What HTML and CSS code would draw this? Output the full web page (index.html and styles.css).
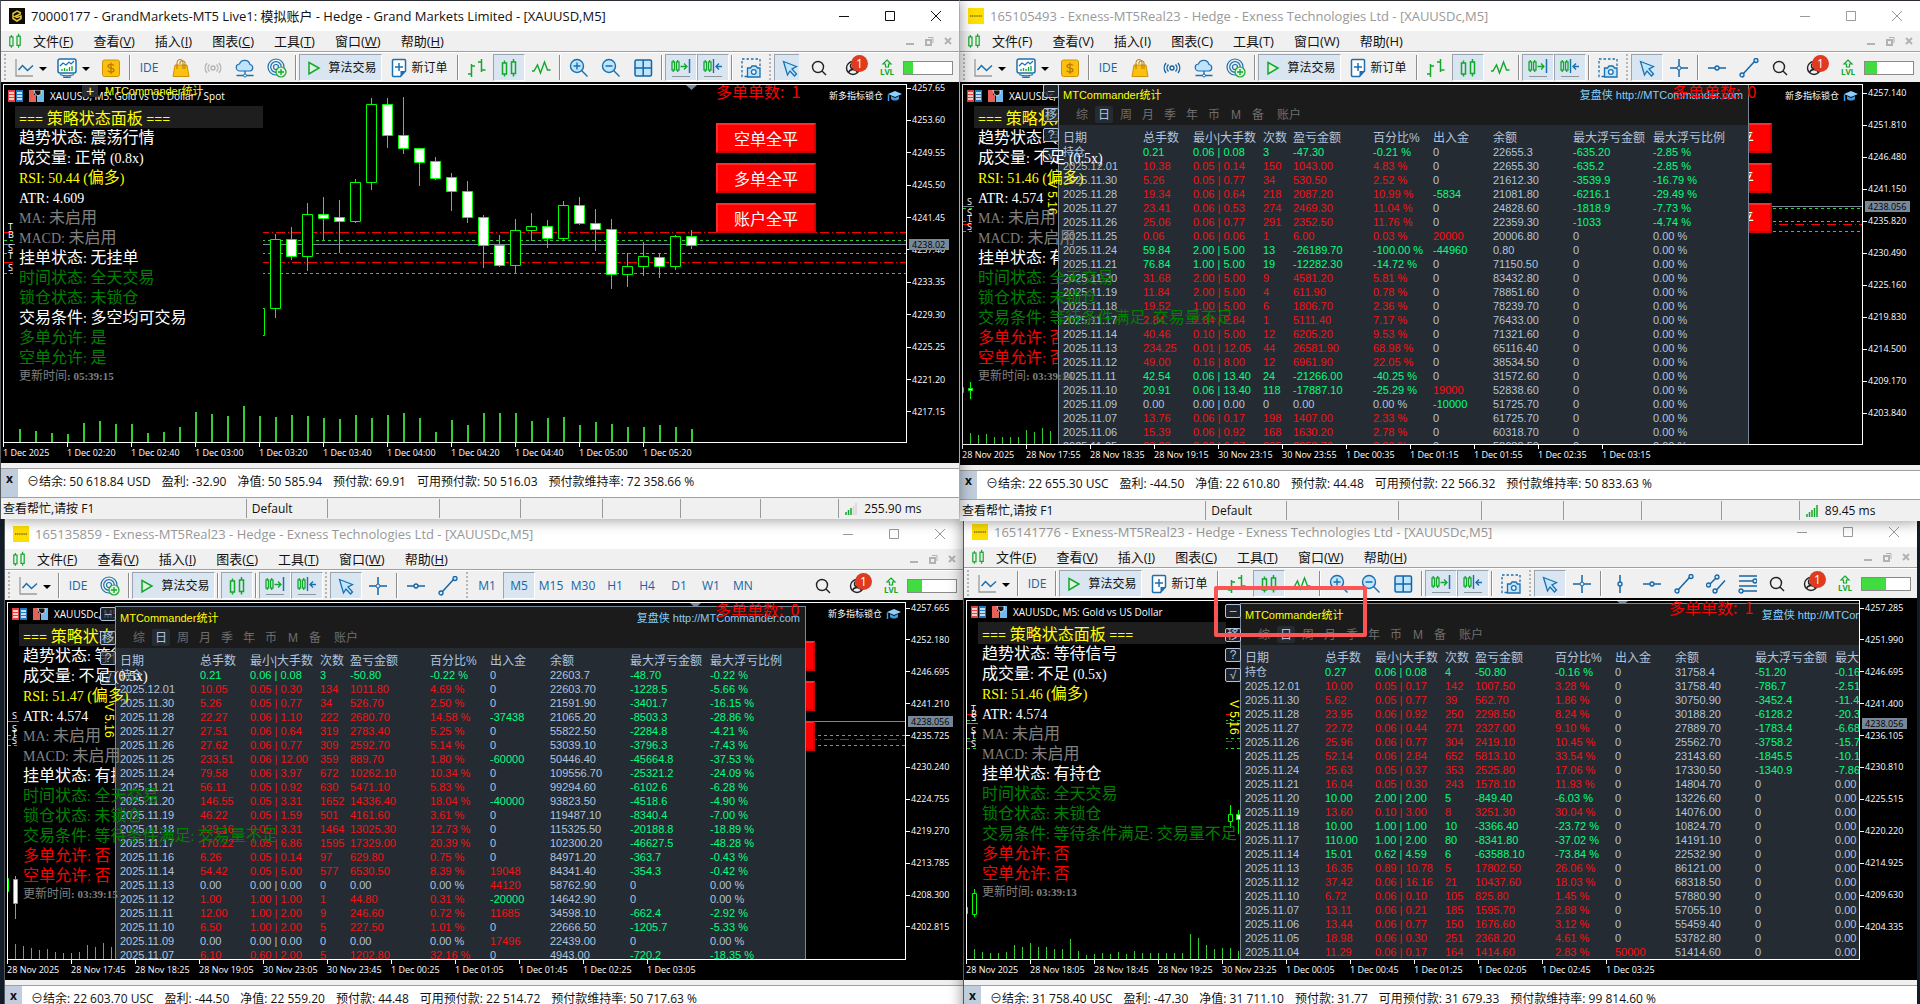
FILE: index.html
```html
<!DOCTYPE html>
<html lang="zh-CN">
<head>
<meta charset="utf-8">
<title>MetaTrader 5</title>
<link rel="stylesheet" href="styles.css">
</head>
<body>
<svg class="sprite" aria-hidden="true">
  <symbol id="i-candles" viewBox="0 0 20 20"><g fill="none" stroke="#12a82a" stroke-width="1.5"><rect x="3.5" y="5" width="4" height="11"/><path d="M5.500 2.500v2.500M5.500 16v2.500M14.500 1v3M14.500 15.500v3"/><rect x="12.500" y="4" width="4" height="11.500"/></g></symbol>
  <symbol id="i-line" viewBox="0 0 20 20"><path d="M2 1v17h17" fill="none" stroke="#9a9a9a" stroke-width="1.300"/><path d="M4.500 12l4-4.500 5 5 5.500-5" fill="none" stroke="#1b6fae" stroke-width="1.500"/></symbol>
  <symbol id="i-ind" viewBox="0 0 20 20"><rect x="1" y="1" width="18" height="14" rx="2" fill="#fff" stroke="#1b6fae" stroke-width="1.500"/><path d="M3 8l3-3 3 2 3-3 2 2 3-3" fill="none" stroke="#1b6fae" stroke-width="1.200"/><path d="M5 13v-2M7.500 13v-3M10 13v-2M12.500 13v-4M15 13v-5" stroke="#12a82a" stroke-width="1.300"/><path d="M3 16.500c4 1.500 10 1.500 14 0M6 18.800c3 .8 5 .8 8 0" fill="none" stroke="#1b6fae" stroke-width="1.300"/></symbol>
  <symbol id="i-dollar" viewBox="0 0 20 20"><rect x="1.500" y="2" width="17" height="16.500" rx="2" fill="#fcc10f" stroke="#cf9300"/><path d="M10 4.500v11.500M13 7.500c-1-1.700-6-1.700-6 .7 0 2.500 6 1.400 6 4 0 2.400-5 2.400-6.300.5" fill="none" stroke="#b87800" stroke-width="1.300"/></symbol>
  <symbol id="i-bag" viewBox="0 0 20 20"><path d="M4 7h12l2 11.500H2z" fill="#fcc10f" stroke="#cf9300"/><path d="M6 11V4.500a3 3 0 0 1 6 0V11M9 6V4a3 2.500 0 0 1 5 0v7" fill="none" stroke="#b87800"/></symbol>
  <symbol id="i-signal" viewBox="0 0 20 20"><g fill="none" stroke="currentColor" stroke-width="1.400"><circle cx="10" cy="10" r="2"/><path d="M6.500 6.500a5 5 0 0 0 0 7M13.500 6.500a5 5 0 0 1 0 7M4 5a8 8 0 0 0 0 10M16 5a8 8 0 0 1 0 10"/></g></symbol>
  <symbol id="i-cloud" viewBox="0 0 20 20"><path d="M5 13a3.500 3.500 0 0 1-.5-7A5.500 5.500 0 0 1 15 6.500a3.300 3.300 0 0 1 0 6.500z" fill="#bfe3fa" stroke="#1b6fae" stroke-width="1.200"/><path d="M10 13v3M1.500 17.500h7M11.500 17.500h7" stroke="#1b6fae" stroke-width="1.300"/><circle cx="10" cy="17.500" r="1.500" fill="none" stroke="#1b6fae"/></symbol>
  <symbol id="i-vps" viewBox="0 0 20 20"><g fill="none" stroke="#1b6fae" stroke-width="1.200"><circle cx="9" cy="9" r="8"/><circle cx="9" cy="9" r="5.300"/><circle cx="9" cy="9" r="2.500"/></g><circle cx="14" cy="14" r="5" fill="#dff5df" stroke="#12a82a" stroke-width="1.200"/><path d="M14 11v6M11 14h6" stroke="#12a82a" stroke-width="1.300"/></symbol>
  <symbol id="i-play" viewBox="0 0 20 20"><path d="M5 4.500l10 5.500-10 6z" fill="#dcf5dc" stroke="#12a82a" stroke-width="1.500"/></symbol>
  <symbol id="i-order" viewBox="0 0 20 20"><path d="M4.500 1.500h11a1 1 0 0 1 1 1v10.500l-5 5.500h-7a1 1 0 0 1-1-1v-15a1 1 0 0 1 1-1z" fill="#fff" stroke="#1b6fae" stroke-width="1.500"/><path d="M16.500 13l-5 5.500V13z" fill="#1b6fae"/><path d="M10 5v8M6 9h8" stroke="#1b6fae" stroke-width="1.500"/></symbol>
  <symbol id="i-bars" viewBox="0 0 20 20"><path d="M4.500 6v13M1 16h3.500M4.500 8h3.500M14.500 1v13M11 4h3.500M14.500 12h4" fill="none" stroke="#12a82a" stroke-width="1.500"/></symbol>
  <symbol id="i-zigzag" viewBox="0 0 20 20"><path d="M1 13h2l3.500-6 3 8 4-11 3 8h3" fill="none" stroke="#12a82a" stroke-width="1.400"/></symbol>
  <symbol id="i-zin" viewBox="0 0 20 20"><circle cx="8" cy="8" r="6.500" fill="#bfe6ff" stroke="#1b6fae" stroke-width="1.400"/><path d="M12.800 12.800L18.500 18.500M8 4.500v7M4.500 8h7" stroke="#1b6fae" stroke-width="1.400"/></symbol>
  <symbol id="i-zout" viewBox="0 0 20 20"><circle cx="8" cy="8" r="6.500" fill="#bfe6ff" stroke="#1b6fae" stroke-width="1.400"/><path d="M12.800 12.800L18.500 18.500M4.500 8h7" stroke="#1b6fae" stroke-width="1.400"/></symbol>
  <symbol id="i-grid" viewBox="0 0 20 20"><rect x="2" y="2" width="16.500" height="16" rx="1.500" fill="#bfe6ff" stroke="#1565a5" stroke-width="1.500"/><path d="M10.200 2v16M2 10h16.500" stroke="#1565a5" stroke-width="1.500"/></symbol>
  <symbol id="i-shiftr" viewBox="0 0 20 20"><g fill="none" stroke="#12a82a" stroke-width="1.300"><rect x="1" y="4" width="2.500" height="8"/><rect x="5.500" y="4" width="2.500" height="8"/><path d="M2.200 2v2M2.200 12v2M6.700 2v2M6.700 12v2M9.500 8.500H16M13 5.500l3 3-3 3"/></g><path d="M18.500 1v14" stroke="#1b6fae" stroke-width="1.500"/><path d="M1 18.500h18" stroke="#8d949b"/></symbol>
  <symbol id="i-shiftl" viewBox="0 0 20 20"><g fill="none" stroke="#12a82a" stroke-width="1.300"><rect x="1" y="4" width="2.500" height="8"/><rect x="5.500" y="4" width="2.500" height="8"/><path d="M2.200 2v2M2.200 12v2M6.700 2v2M6.700 12v2"/></g><path d="M10.500 1v14M19 8.500h-6M16 5.500l-3 3 3 3" fill="none" stroke="#1b6fae" stroke-width="1.400"/><path d="M1 18.500h18" stroke="#8d949b"/></symbol>
  <symbol id="i-cam" viewBox="0 0 20 20"><path d="M6 18.500H1V1h18v7" fill="none" stroke="#1b6fae" stroke-width="1.300" stroke-dasharray="2.500 2"/><path d="M6.500 10h3l1.500-2h4l1.500 2h2.500v9h-12.500z" fill="#bfe6ff" stroke="#1b6fae" stroke-width="1.300"/><circle cx="12.800" cy="14" r="2.300" fill="#fff" stroke="#1b6fae" stroke-width="1.300"/></symbol>
  <symbol id="i-cursor" viewBox="0 0 20 20"><path d="M3.500 3.500l13 5-4.500 2.500 4.500 5-2 2-4.500-5-2.500 4z" fill="#bfe6ff" stroke="#1b6fae" stroke-width="1.300"/></symbol>
  <symbol id="i-cross" viewBox="0 0 20 20"><path d="M10 1v7M10 12v7M1 10h7M12 10h7" stroke="#1565a5" stroke-width="1.500"/><circle cx="10" cy="10" r="2" fill="#cfeaff" stroke="#1565a5"/></symbol>
  <symbol id="i-hline" viewBox="0 0 20 20"><path d="M1 10h7M12 10h7" stroke="#1565a5" stroke-width="1.500"/><circle cx="10" cy="10" r="2" fill="#cfeaff" stroke="#1565a5" stroke-width="1.300"/></symbol>
  <symbol id="i-vline" viewBox="0 0 20 20"><path d="M10 1v7M10 12v7" stroke="#1565a5" stroke-width="1.500"/><circle cx="10" cy="10" r="2" fill="#cfeaff" stroke="#1565a5" stroke-width="1.300"/></symbol>
  <symbol id="i-trend" viewBox="0 0 20 20"><path d="M4.500 15.500l11-12" stroke="#1565a5" stroke-width="1.500"/><g fill="#cfeaff" stroke="#1565a5" stroke-width="1.300"><circle cx="3" cy="17" r="2"/><circle cx="17" cy="2.500" r="2"/></g></symbol>
  <symbol id="i-channel" viewBox="0 0 20 20"><path d="M3 11l8-8M10 16.500l9-10" stroke="#1565a5" stroke-width="1.500"/><g fill="#cfeaff" stroke="#1565a5" stroke-width="1.300"><circle cx="2.500" cy="11" r="2"/><circle cx="11" cy="3" r="2"/><circle cx="9" cy="17" r="2"/></g></symbol>
  <symbol id="i-fibo" viewBox="0 0 20 20"><path d="M1 2h18M1 7h14M1 12h18M5 17h14" stroke="#1565a5" stroke-width="1.500"/><g fill="#cfeaff" stroke="#1565a5" stroke-width="1.300"><circle cx="17" cy="7" r="2"/><circle cx="3" cy="17" r="2"/></g></symbol>
  <symbol id="i-search" viewBox="0 0 20 20"><circle cx="9" cy="9" r="5.500" fill="none" stroke="#222" stroke-width="1.400"/><path d="M13 13l4 4" stroke="#222" stroke-width="1.500"/></symbol>
  <symbol id="i-user" viewBox="0 0 20 20"><g fill="none" stroke="#222" stroke-width="1.400"><circle cx="10" cy="10" r="6.500"/><circle cx="10" cy="8" r="2.500"/><path d="M5.500 14.500c1.500-4 7.500-4 9 0"/></g></symbol>
  <symbol id="i-lvl" viewBox="0 0 12 9"><path d="M6 1L10 5H7.500V8h-3V5H2z" fill="none" stroke="#12a82a" stroke-width="1.200"/></symbol>
  <symbol id="i-book" viewBox="0 0 15 12"><path d="M0 0h7v12H0z" fill="#e8403a"/><path d="M8 0h7v12H8z" fill="#1f78c0"/><path d="M1 3h5M1 6h5M1 9h5M9 3h5M9 6h5M9 9h5" stroke="#fff" stroke-width="1.500"/></symbol>
  <symbol id="i-deal" viewBox="0 0 15 12"><path d="M0 0h5v5h2v7H0z" fill="#e8605a"/><path d="M15 0h-3v5H8v7h7z" fill="#6fb9ee"/><path d="M5 0h7v4l-3 2-3-2z" fill="#111" stroke="#fff" stroke-width=".8"/></symbol>
  <symbol id="i-cap" viewBox="0 0 15 12"><path d="M8 1l7 3-7 3-7-3z" fill="#8fd0ff"/><path d="M4 6v3c2 2 6 2 8 0V6L8 8z" fill="#3d9be0"/><path d="M1.500 4.500V11" stroke="#3d9be0" stroke-width="1.500"/></symbol>
  <symbol id="i-net" viewBox="0 0 12 12"><path d="M1 12V9M3.500 12V7" stroke="#12a82a" stroke-width="1.500"/><path d="M6 12V5" stroke="#12a82a" stroke-width="1.500"/><path d="M8.500 12V3M11 12V0" stroke="currentColor" stroke-width="1.500"/></symbol>
  <symbol id="i-grand" viewBox="0 0 16 16"><path fill="#0b0b08" d="M0 0h16v16H0z"/><path d="M12 5L8 3 4 5.500v5L8 13l4-2.500V8L8 9.500 6 8.500 12 5.500" fill="none" stroke="#e8c33a" stroke-width="1.500"/></symbol>
  <symbol id="i-exness" viewBox="0 0 16 16"><path fill="#ffdf00" d="M0 0h16v16H0z"/><path d="M2 8h12" stroke="#7d7016" stroke-width="1.500" stroke-dasharray="1.400 .7"/></symbol>
  <symbol id="i-min" viewBox="0 0 12 12"><path d="M1 6.500h10" stroke="currentColor"/></symbol>
  <symbol id="i-max" viewBox="0 0 12 12"><path d="M1.500 1.500h9v9h-9z" fill="none" stroke="currentColor"/></symbol>
  <symbol id="i-close" viewBox="0 0 12 12"><path d="M1 1l10 10M11 1L1 11" stroke="currentColor"/></symbol>
  <symbol id="i-mmin" viewBox="0 0 10 10"><path d="M1 8h8" stroke="#b2b2b2" stroke-width="2"/></symbol>
  <symbol id="i-mres" viewBox="0 0 10 10"><path d="M2 4h5v5H2z" fill="none" stroke="#b2b2b2" stroke-width="2"/><path d="M4 1.500h5V7" fill="none" stroke="#b2b2b2"/></symbol>
  <symbol id="i-mclose" viewBox="0 0 10 10"><path d="M2 2l6 6M8 2L2 8" stroke="#b2b2b2" stroke-width="2"/></symbol>
</svg>

<main class="desktop">
  <section class="win win-1 active" data-id="grand" data-tools="line* ind* dollar | IDE bag signal cloud vps | algo order | bars candles! zigzag | zin zout grid | shiftr! shiftl! | cam : cursor!">
    <header class="titlebar"><svg class="app-icon"><use href="#i-grand"/></svg><h1>70000177 - GrandMarkets-MT5 Live1: 模拟账户 - Hedge - Grand Markets Limited - [XAUUSD,M5]</h1></header>
    <div class="chart"></div>
    <div class="trade"><button aria-label="关闭">x</button><p><span>⊖结余: 50 618.84 USD</span><span>盈利: -32.90</span><span>净值: 50 585.94</span><span>预付款: 69.91</span><span>可用预付款: 50 516.03</span><span>预付款维持率: 72 358.66 %</span></p></div>
    <footer class="status" data-ping="255.90 ms"></footer>
  </section>

  <section class="win win-2 plain-keys" data-id="ex493" data-tools="line* ind* dollar | IDE bag signal cloud vps | algo order | bars candles! zigzag | shiftr! shiftl! | cam : cursor! cross | hline trend">
    <header class="titlebar"><svg class="app-icon"><use href="#i-exness"/></svg><h1>165105493 - Exness-MT5Real23 - Hedge - Exness Technologies Ltd - [XAUUSDc,M5]</h1></header>
    <div class="chart"></div>
    <div class="trade"><button aria-label="关闭">x</button><p><span>⊖结余: 22 655.30 USC</span><span>盈利: -44.50</span><span>净值: 22 610.80</span><span>预付款: 44.48</span><span>可用预付款: 22 566.32</span><span>预付款维持率: 50 833.63 %</span></p></div>
    <footer class="status" data-ping="89.45 ms"></footer>
  </section>

  <section class="win win-3" data-id="ex859" data-tools="line* | IDE vps | algo | candles! | shiftr! shiftl! : cursor! cross | hline trend : M1 M5! M15 M30 H1 H4 D1 W1 MN">
    <header class="titlebar"><svg class="app-icon"><use href="#i-exness"/></svg><h1>165135859 - Exness-MT5Real23 - Hedge - Exness Technologies Ltd - [XAUUSDc,M5]</h1></header>
    <div class="chart"></div>
    <div class="trade"><button aria-label="关闭">x</button><p><span>⊖结余: 22 603.70 USC</span><span>盈利: -44.50</span><span>净值: 22 559.20</span><span>预付款: 44.48</span><span>可用预付款: 22 514.72</span><span>预付款维持率: 50 717.63 %</span></p></div>
  </section>

  <section class="win win-4" data-id="ex776" data-tools="line* | IDE | algo order | bars candles! zigzag | zin zout grid | shiftr! shiftl! | cam : cursor! cross | vline hline trend channel fibo">
    <header class="titlebar"><svg class="app-icon"><use href="#i-exness"/></svg><h1>165141776 - Exness-MT5Real23 - Hedge - Exness Technologies Ltd - [XAUUSDc,M5]</h1></header>
    <div class="chart"></div>
    <div class="trade"><button aria-label="关闭">x</button><p><span>⊖结余: 31 758.40 USC</span><span>盈利: -47.30</span><span>净值: 31 711.10</span><span>预付款: 31.77</span><span>可用预付款: 31 679.33</span><span>预付款维持率: 99 814.60 %</span></p></div>
    <div class="highlight"></div>
  </section>
</main>
<script src="app.js"></script>
</body>
</html>
```

FILE: styles.css
```css
* { box-sizing: border-box; }

:root {
  --ui: "Open Sans", "Noto Sans CJK SC", sans-serif;
  --object: "Liberation Sans", "Noto Sans CJK SC", sans-serif;
  --face: #f0f0f0;
  --steel: #b0c4de;
  --slate: #778899;
  --up: #00ff00;
}

body { margin: 0; font: 12px/16px var(--ui); color: #111; }
h1, h2, p, ul, ol { margin: 0; padding: 0; font: inherit; list-style: none; }
button { margin: 0; padding: 0; border: 0; background: none; font: inherit; color: inherit; }
svg { display: block; }
.sprite { display: none; }

.desktop { position: relative; height: 100vh; overflow: hidden; background: #16232f; }

/* ---- windows ---- */
.win { position: absolute; display: flex; flex-direction: column; background: var(--face); border-left: 1px solid #55585c; box-shadow: 0 0 14px rgba(0, 0, 0, .45); }
.win-1 { left: 0; top: 0; width: calc(50% - 1px); height: calc(50vh + 17px); z-index: 4; border-top: 1px solid #2b2b33; --axis: 52px; --pad-top: 0; --pad-bottom: 45px; }
.win-2 { left: calc(50% - 1px); top: 0; right: 0; height: calc(50vh + 19px); z-index: 3; border-top: 1px solid #2b2b33; border-left-color: #d8d8d8; --axis: 57px; --pad-top: 5px; --pad-bottom: 46px; }
.win-3 { left: 4px; top: calc(50vh + 16px); width: calc(50% - 1px); height: calc(50vh + 16px); z-index: 1; border-top: 1px solid #888; --axis: 57px; --pad-top: 2px; --pad-bottom: 47px; }
.win-4 { left: calc(50% + 3px); top: calc(50vh + 14px); right: 3px; height: calc(50vh + 18px); z-index: 2; border-top: 1px solid #888; --axis: 57px; --pad-top: 4px; --pad-bottom: 47px; }
.win-3, .win-4 { padding-bottom: 21px; }

.titlebar { flex: none; display: flex; align-items: center; height: 30px; padding-left: 8px; background: #fff; color: #999; white-space: nowrap; font-size: 13px; }
.active .titlebar { color: #111; }
.app-icon { width: 16px; height: 16px; margin-right: 6px; }
.titlebar h1 { flex: 1; }
.caption { display: flex; }
.caption button { width: 46px; height: 30px; display: grid; place-items: center; }
.caption svg { width: 12px; height: 12px; }

.menubar { flex: none; display: flex; align-items: center; height: 21px; padding-left: 6px; border-bottom: 1px solid #a0a0a0; font-size: 13px; }
.menubar > svg { width: 16px; height: 16px; }
.menubar ul { display: flex; flex: 1; }
.menubar li button { padding: 0 10px; }
.plain-keys u { text-decoration: none; }
.mdi { display: flex; gap: 9px; padding-right: 6px; }
.mdi svg { width: 10px; height: 10px; }

.toolbar { flex: none; display: flex; height: 30px; border-top: 1px solid #fff; }
.tools { flex: 1; min-width: 0; display: flex; align-items: center; overflow: hidden; padding-left: 1px; }
.tools button { flex: none; width: 32px; height: 27px; display: flex; align-items: center; justify-content: center; color: #1565a5; border: 1px solid transparent; background-clip: padding-box; }
.tools svg { flex: none; width: 20px; height: 20px; }
.tools button.pressed { background-color: #d9e6f2; border-color: #9aa5b0 #fff #fff #9aa5b0; }
.tools .drop { width: 43px; gap: 5px; }
.tools .drop::after { content: ""; border: 4px solid transparent; border-top-color: #000; border-bottom: 0; margin-top: 3px; }
.tools .algo { width: 83px; gap: 4px; color: #111; }
.tools .order { width: 73px; gap: 2px; color: #111; }
.win-1 .tools .signal { color: #b4b4b4; }
.sep { flex: none; width: 2px; height: 25px; margin: 0 2px; border-left: 1px solid #8c8c8c; border-right: 1px solid #fff; }
.grip { flex: none; width: 2px; height: 27px; margin: 0 3px 0 2px; background: repeating-linear-gradient(#b5b5b5 0 2px, transparent 2px 4px); }
.right-tools { flex: none; display: flex; align-items: center; padding: 0 6px 0 4px; background: var(--face); }
.right-tools button { position: relative; width: 32px; height: 27px; display: flex; align-items: center; justify-content: center; }
.right-tools svg { width: 20px; height: 20px; }
.right-tools .lvl { flex-direction: column; font: bold 8px/8px var(--ui); color: #12a82a; }
.right-tools .lvl svg { flex: none; width: 12px; height: 9px; }
.right-tools .user { width: 36px; }
.badge { position: absolute; left: 16px; top: 1px; width: 17px; height: 17px; border-radius: 50%; background: #e03a20; color: #fff; font: 12px/17px var(--ui); text-align: center; }
progress { appearance: none; width: 50px; height: 14px; border: 1px solid #8a8a8a; background: #fff; }
progress::-webkit-progress-bar { background: #fff; }
progress::-webkit-progress-value { background: #40dc40; }

/* ---- chart ---- */
.chart { flex: 1; min-height: 0; display: grid; grid-template-columns: minmax(0, 1fr) var(--axis); grid-template-rows: minmax(0, 1fr) 20px; padding: 2px 0 0 2px; background: #000; color: #fff; font-size: 9px; line-height: 12px; }
.plot { position: relative; overflow: hidden; border: 1px solid #fff; }
.plot > .canvas { position: absolute; inset: 0; width: 100%; height: 100%; }
.prices { grid-row: 1 / 3; grid-column: 2; position: relative; display: flex; flex-direction: column; justify-content: space-between; margin-top: -2px; padding: var(--pad-top) 0 var(--pad-bottom); }
.prices li { display: flex; align-items: center; gap: 1px; }
.prices li::before { content: ""; width: 4px; height: 1px; background: #fff; }
.prices .last { position: absolute; left: 2px; padding: 0 4px 0 3px; line-height: 11px; background: var(--slate); color: #000; }
.prices .last::before { display: none; }
.times { display: flex; overflow: hidden; }
.times li { flex: none; width: 64px; padding-top: 4px; white-space: nowrap; position: relative; }
.times li::before { content: ""; position: absolute; left: 0; top: 0; width: 1px; height: 4px; background: #fff; }

.volume { position: absolute; left: 7px; bottom: 0; display: flex; align-items: flex-end; gap: 7px; }
.volume i { width: 1px; background: #32cd32; }
.win-1 .volume { left: 15px; gap: 14px; }
.win-1 .volume i { width: 2px; }

.symbol { position: absolute; left: 4px; top: 5px; display: flex; align-items: center; gap: 6px; white-space: nowrap; font-size: 10px; }
.symbol svg { width: 15px; height: 12px; }
.expert { position: absolute; right: 4px; top: 5px; display: flex; align-items: center; gap: 4px; font-family: "Noto Sans CJK SC", sans-serif; }
.expert svg { width: 15px; height: 12px; }

.strategy { position: absolute; left: 11px; top: 21px; width: 248px; background: #000; white-space: nowrap; font-family: "Noto Sans CJK SC", sans-serif; font-size: 16px; line-height: 20px; }
.strategy h2 { height: 22px; margin-bottom: -2px; padding: 0 4px; background: #1e1e1e; color: #ff0; font-size: 16px; line-height: 22px; }
.strategy li { position: relative; width: max-content; height: 20px; padding-left: 4px; }
.strategy .over { z-index: 3; }
.strategy span { font: 14px/20px "Liberation Serif", serif; }
.strategy h2 span { font-family: var(--ui); }
.strategy .time { font-size: 12px; line-height: 18px; }
.strategy .time span { font: bold 11px/18px "Liberation Serif", serif; }
.white { color: #fff; } .yellow { color: #ff0; } .grey { color: #808080; } .green { color: #008000; } .red { color: #f00; }

.count { position: absolute; right: 98px; top: -4px; width: 92px; z-index: 4; color: #f00; font: 16px/20px "Noto Sans CJK SC", sans-serif; white-space: pre; }
.actions { position: absolute; right: 90px; top: 38px; display: grid; gap: 10px; }
.actions button { width: 100px; height: 30px; background: #f00; border: 2px solid; border-color: #ff2a2a #d00000 #d00000 #ff2a2a; color: #fff; font: 16px/20px "Noto Sans CJK SC", sans-serif; }

.folded { position: absolute; left: 78px; top: 0; display: flex; gap: 7px; color: #ff0; font: 11px/12px var(--object); }
.folded button { width: 16px; height: 12px; background: #252b33; font-size: 14px; }

/* ---- statistics panel ---- */
.stats { position: absolute; z-index: 2; bottom: 0; width: 691px; background: #252b33; border: 1px solid var(--slate); border-bottom: 0; color: var(--steel); font: 11px/14px var(--object); }
.win-2 .stats { left: 95px; top: -2px; }
.win-3 .stats { left: 107px; top: 3px; }
.win-4 .stats { left: 273px; top: 2px; }
.stats header { height: 41px; background: #1b1b1b; font-size: 12px; }
.stats .head { display: flex; justify-content: space-between; padding: 0 5px 0 4px; font-size: 11px; line-height: 22px; color: #ff0; }
.stats .head a { color: #87cefa; text-decoration: none; }
.tabs { display: flex; padding-left: 14px; gap: 4px; color: #6e6e6e; }
.tabs button { min-width: 18px; height: 17px; border-radius: 2px; }
.tabs .on { background: #252b33; color: var(--steel); }
.tabs button:last-child { margin-left: 6px; }
.stats table { table-layout: fixed; width: 689px; margin-top: 6px; border-collapse: collapse; }
.stats th, .stats td { height: 14px; padding: 0 0 0 4px; text-align: left; font-weight: normal; white-space: nowrap; line-height: 14px; }
.stats th { font-size: 12px; }
.stats .gain { color: #f01414; } .stats .loss { color: #00ff7f; }

.side { position: absolute; z-index: 2; right: 100%; top: 0; width: 16px; display: grid; gap: 6px; }
.side button { height: 14px; background: #252b33cc; border: 1px solid var(--steel); border-radius: 2px; color: var(--steel); font: 12px/12px var(--object); overflow: hidden; }
.side button:first-child { margin-bottom: 4px; }
.side span { writing-mode: vertical-rl; margin-top: 12px; color: #ff0; font-size: 12px; }

/* ---- bottom panes ---- */
.trade { flex: none; display: flex; height: 35px; border-top: 5px solid var(--face); background: #fff; box-shadow: inset 0 1px #a0a0a0, inset 0 -1px #a0a0a0; white-space: nowrap; }
.trade button { width: 17px; margin: 1px 0; padding-bottom: 8px; background: #c0cddc; line-height: 12px; font-weight: bold; }
.trade p { display: flex; gap: 11px; padding-left: 9px; line-height: 28px; }
.status { flex: none; display: grid; height: 21px; grid-template-columns: 245fr 81fr 112fr 82fr 82fr 78fr 80fr 78fr 121fr; padding: 1px 0; line-height: 19px; }
.status > * { display: flex; align-items: center; gap: 6px; padding-left: 5px; border-left: 1px solid #9a9a9a; white-space: nowrap; }
.status > :first-child { border: 0; padding-left: 2px; }
.status svg { width: 14px; height: 12px; color: #12a82a; }
.active .status svg { color: #d5d5d5; }

.highlight { position: absolute; left: 250px; top: 69px; width: 153px; height: 51px; z-index: 5; border: 4px solid #fb5454; border-radius: 2px; }
```

FILE: app.js
```js
const icon = (name) => `<svg><use href="#i-${name}"/></svg>`;
const labels = { algo: ["play", "算法交易"], order: ["order", "新订单"] };

function tool(token) {
  if (token === "|") return '<span class="sep"></span>';
  if (token === ":") return '<span class="grip"></span>';
  const name = token.replace(/[!*]/, "");
  const cls = [name, token.endsWith("*") ? "drop" : "", token.endsWith("!") || name === "algo" ? "pressed" : ""].join(" ");
  if (labels[name]) return `<button class="${cls}">${icon(labels[name][0])}${labels[name][1]}</button>`;
  if (/^[A-Z]/.test(name)) return `<button class="${cls}">${name}</button>`;
  return `<button class="${cls}" aria-label="${name}">${icon(name)}</button>`;
}

const menus = [["文件", "F"], ["查看", "V"], ["插入", "I"], ["图表", "C"], ["工具", "T"], ["窗口", "W"], ["帮助", "H"]];
const waiting = (time, unheld) => [
  ["white", "趋势状态: 等待信号"], ["white", "成交量: 不足 (0.5x)", 1], ["yellow", `RSI: ${unheld} (偏多)`, 1], ["white", "ATR: 4.574", 1],
  ["grey", "MA: 未启用", 1], ["grey", "MACD: 未启用", 1], ["white", "挂单状态: 有持仓"], ["green", "时间状态: 全天交易", 1],
  ["green", "锁仓状态: 未锁仓", 1], ["green", "交易条件: 等待条件满足: 交易量不足", 1], ["red", "多单允许: 否"], ["red", "空单允许: 否"], ["grey time", `更新时间: ${time}`, 1]
];

const charts = {
  grand: {
    symbol: "XAUUSD, M5: Gold vs US Dollar / Spot", first: 4257.65, step: 4.05, digits: 2, last: ["4238.02", 157], level: 18, count: "多单单数:  1",
    times: "1 Dec 2025,1 Dec 02:20,1 Dec 02:40,1 Dec 03:00,1 Dec 03:20,1 Dec 03:40,1 Dec 04:00,1 Dec 04:20,1 Dec 04:40,1 Dec 05:00,1 Dec 05:20",
    lines: [["r", 147], ["g", 155], ["s", 159], ["g", 168], ["r", 177], ["g", 188]],
    marks: [["T", 145], ["B", 153], ["S", 166], ["T", 174], ["S", 186]], shift: 687,
    volume: [13, 11, 9, 8, 19, 21, 18, 18, 9, 10, 15, 30, 28, 26, 36, 26, 25, 27, 26, 24, 23, 27, 24, 27, 29, 24, 10, 22, 17, 29, 29, 29, 21, 24, 25, 17, 20, 18, 15, 15, 17, 15, 13],
    half: 5,
    candles: [[255, 223, 223, 250, 250, 0], [271, 149, 154, 223, 233, 0], [287, 142, 154, 171, 175, 1], [303, 118, 129, 171, 186, 0], [319, 112, 129, 133, 155, 1], [335, 115, 132, 136, 168, 1], [351, 94, 97, 136, 138, 0], [367, 13, 19, 97, 105, 0], [383, 13, 19, 50, 63, 1], [399, 12, 50, 63, 69, 1], [415, 63, 63, 77, 101, 1], [431, 72, 76, 93, 95, 1], [447, 88, 92, 106, 126, 1], [463, 96, 106, 132, 138, 1], [479, 130, 132, 160, 183, 1], [495, 150, 160, 180, 182, 1], [511, 134, 145, 180, 188, 0], [527, 128, 141, 145, 156, 0], [543, 135, 141, 153, 163, 1], [559, 116, 120, 153, 156, 0], [575, 112, 120, 138, 140, 1], [591, 124, 138, 144, 166, 1], [607, 134, 144, 189, 204, 1], [623, 168, 181, 189, 202, 0], [639, 157, 171, 181, 191, 0], [655, 169, 172, 181, 193, 1], [671, 150, 151, 181, 185, 0], [687, 145, 151, 160, 164, 1]],
    strategy: [["white", "趋势状态: 震荡行情"], ["white", "成交量: 正常 (0.8x)"], ["yellow", "RSI: 50.44 (偏多)"], ["white", "ATR: 4.609"], ["grey", "MA: 未启用"], ["grey", "MACD: 未启用"], ["white", "挂单状态: 无挂单"], ["green", "时间状态: 全天交易"], ["green", "锁仓状态: 未锁仓"], ["white", "交易条件: 多空均可交易"], ["green", "多单允许: 是"], ["green", "空单允许: 是"], ["grey time", "更新时间: 05:39:15"]]
  },
  ex493: {
    symbol: "XAUUSDc, M5: Gold vs US Dollar", first: 4257.14, step: 5.33, digits: 3, last: ["4238.056", 119], level: 26, count: "多单单数:  0",
    times: "28 Nov 2025,28 Nov 17:55,28 Nov 18:35,28 Nov 19:15,30 Nov 23:15,30 Nov 23:55,1 Dec 00:35,1 Dec 01:15,1 Dec 01:55,1 Dec 02:35,1 Dec 03:15",
    lines: [["s", 121], ["g", 123], ["g", 136], ["r", 139], ["g", 146]],
    marks: [["S", 120], ["S", 131], ["T", 137], ["S", 145]], shift: 671,
    volume: [11, 9, 10, 7, 7, 7, 7, 14, 12, 16, 13], half: 2,
    candles: [[-1, 302, 302, 307, 307, 0], [7, 297, 303, 305, 314, 1]],
    strategy: waiting("03:39:14", "51.46"),
    rows: `持仓,0.21,0.06|0.08,3,-47.30,-0.21,0,22655.3,-635.20,-2.85
2025.12.01,10.38,0.05|0.14,150,1043.00,4.83,0,22655.30,-635.2,-2.85
2025.11.30,5.26,0.05|0.77,34,530.50,2.52,0,21612.30,-3539.9,-16.79
2025.11.28,19.34,0.06|0.64,218,2087.20,10.99,-5834,21081.80,-6216.1,-29.49
2025.11.27,23.41,0.06|0.53,274,2469.30,11.04,0,24828.60,-1818.9,-7.73
2025.11.26,25.06,0.06|0.77,291,2352.50,11.76,0,22359.30,-1033,-4.74
2025.11.25,0.06,0.06|0.06,1,6.00,0.03,20000,20006.80,0,0.00
2025.11.24,59.84,2.00|5.00,13,-26189.70,-100.00,-44960,0.80,0,0.00
2025.11.21,76.84,1.00|5.00,19,-12282.30,-14.72,0,71150.50,0,0.00
2025.11.20,31.68,2.00|5.00,9,4581.20,5.81,0,83432.80,0,0.00
2025.11.19,11.84,2.00|5.00,4,611.90,0.78,0,78851.60,0,0.00
2025.11.18,19.52,1.00|5.00,6,1806.70,2.36,0,78239.70,0,0.00
2025.11.17,2.84,2.84|2.84,1,5111.40,7.17,0,76433.00,0,0.00
2025.11.14,40.46,0.10|5.00,12,6205.20,9.53,0,71321.60,0,0.00
2025.11.13,234.25,0.01|12.05,44,26581.90,68.98,0,65116.40,0,0.00
2025.11.12,49.00,0.16|8.00,12,6961.90,22.05,0,38534.50,0,0.00
2025.11.11,42.54,0.06|13.40,24,-21266.00,-40.25,0,31572.60,0,0.00
2025.11.10,20.91,0.06|13.40,118,-17887.10,-25.29,19000,52838.60,0,0.00
2025.11.09,0.00,0.00|0.00,0,0.00,0.00,-10000,51725.70,0,0.00
2025.11.07,13.76,0.06|0.17,198,1407.00,2.33,0,61725.70,0,0.00
2025.11.06,15.39,0.06|0.92,168,1630.20,2.78,0,60318.70,0,0.00
2025.11.05,23.23,0.06|0.27,205,2253.70,3.99,0,58688.50,0,0.00`
  },
  ex859: {
    symbol: "XAUUSDc, M5: Gold vs US Dollar", first: 4257.665, step: 5.485, digits: 3, last: ["4238.056", 116], level: 30, count: "多单单数:  0",
    times: "28 Nov 2025,28 Nov 17:45,28 Nov 18:25,28 Nov 19:05,30 Nov 23:05,30 Nov 23:45,1 Dec 00:25,1 Dec 01:05,1 Dec 01:45,1 Dec 02:25,1 Dec 03:05",
    lines: [["s", 118], ["g", 132], ["r", 136], ["g", 142]],
    marks: [["S", 116], ["S", 129], ["T", 134], ["S", 141]], shift: 687,
    volume: [15, 13, 11, 9, 10, 7, 6, 6, 7, 14, 12, 16, 12], half: 2,
    candles: [[-1, 275, 275, 288, 288, 0], [7, 273, 276, 300, 316, 1]],
    strategy: waiting("03:39:15", "51.47"),
    rows: `持仓,0.21,0.06|0.08,3,-50.80,-0.22,0,22603.7,-48.70,-0.22
2025.12.01,10.05,0.05|0.30,134,1011.80,4.69,0,22603.70,-1228.5,-5.66
2025.11.30,5.26,0.05|0.77,34,526.70,2.50,0,21591.90,-3401.7,-16.15
2025.11.28,22.27,0.06|1.10,222,2680.70,14.58,-37438,21065.20,-8503.3,-28.86
2025.11.27,27.51,0.06|0.64,319,2783.40,5.25,0,55822.50,-2284.8,-4.21
2025.11.26,27.62,0.06|0.77,309,2592.70,5.14,0,53039.10,-3796.3,-7.43
2025.11.25,233.51,0.06|12.00,359,889.70,1.80,-60000,50446.40,-45664.8,-37.53
2025.11.24,79.58,0.06|3.97,672,10262.10,10.34,0,109556.70,-25321.2,-24.09
2025.11.21,56.11,0.05|0.92,630,5471.10,5.83,0,99294.60,-6102.6,-6.28
2025.11.20,146.55,0.05|3.31,1652,14336.40,18.04,-40000,93823.50,-4518.6,-4.90
2025.11.19,46.22,0.05|1.59,501,4161.60,3.61,0,119487.10,-8340.4,-7.00
2025.11.18,129.16,0.05|3.31,1464,13025.30,12.73,0,115325.50,-20188.8,-18.89
2025.11.17,170.22,0.05|6.86,1595,17329.00,20.39,0,102300.20,-46627.5,-48.28
2025.11.16,6.26,0.05|0.14,97,629.80,0.75,0,84971.20,-363.7,-0.43
2025.11.14,54.42,0.05|5.00,577,6530.50,8.39,19048,84341.40,-354.3,-0.42
2025.11.13,0.00,0.00|0.00,0,0.00,0.00,44120,58762.90,0,0.00
2025.11.12,1.00,1.00|1.00,1,44.80,0.31,-20000,14642.90,0,0.00
2025.11.11,12.00,1.00|2.00,9,246.60,0.72,11685,34598.10,-662.4,-2.92
2025.11.10,6.50,1.00|2.00,5,227.50,1.01,0,22666.50,-1205.7,-5.33
2025.11.09,0.00,0.00|0.00,0,0.00,0.00,17496,22439.00,0,0.00
2025.11.07,6.10,0.60|2.00,5,1202.80,32.16,0,4943.00,-720.2,-18.35`
  },
  ex776: {
    symbol: "XAUUSDc, M5: Gold vs US Dollar", first: 4257.285, step: 5.295, digits: 3, last: ["4238.056", 120], level: 49, count: "多单单数:  1",
    times: "28 Nov 2025,28 Nov 18:05,28 Nov 18:45,28 Nov 19:25,30 Nov 23:25,1 Dec 00:05,1 Dec 00:45,1 Dec 01:25,1 Dec 02:05,1 Dec 02:45,1 Dec 03:25",
    lines: [["r", 113], ["g", 119], ["s", 122], ["g", 137], ["r", 140], ["g", 147]],
    marks: [["T", 111], ["B", 116], ["S", 120], ["S", 133], ["T", 138], ["S", 146]], shift: 655,
    volume: [10, 7, 6, 6, 7, 14, 12, 16, 12, 12, 10, 10, 20, 8, 4, 5, 6, 5, 7, 5, 8, 6, 6, 6, 6, 6, 6, 25, 21, 14, 10, 11, 11, 8], half: 2,
    candles: [[-1, 306, 306, 312, 312, 1], [7, 288, 292, 313, 316, 0], [263, 204, 213, 220, 227, 0], [271, 209, 213, 218, 233, 1]],
    strategy: waiting("03:39:13", "51.46"),
    rows: `持仓,0.27,0.06|0.08,4,-50.80,-0.16,0,31758.4,-51.20,-0.16
2025.12.01,10.00,0.05|0.17,142,1007.50,3.28,0,31758.40,-786.7,-2.51
2025.11.30,5.62,0.05|0.77,39,562.70,1.86,0,30750.90,-3452.4,-11.42
2025.11.28,23.95,0.06|0.92,250,2298.50,8.24,0,30188.20,-6128.2,-20.31
2025.11.27,22.72,0.06|0.44,271,2327.00,9.10,0,27889.70,-1783.4,-6.68
2025.11.26,25.96,0.06|0.77,304,2419.10,10.45,0,25562.70,-3758.2,-15.74
2025.11.25,52.14,0.06|2.84,652,5813.10,33.54,0,23143.60,-1845.5,-10.12
2025.11.24,25.63,0.05|0.37,353,2525.80,17.06,0,17330.50,-1340.9,-7.86
2025.11.21,16.04,0.05|0.30,243,1578.10,11.93,0,14804.70,0,0.00
2025.11.20,10.00,2.00|2.00,5,-849.40,-6.03,0,13226.60,0,0.00
2025.11.19,13.60,0.10|3.00,8,3251.30,30.04,0,14076.00,0,0.00
2025.11.18,10.00,1.00|1.00,10,-3366.40,-23.72,0,10824.70,0,0.00
2025.11.17,110.00,1.00|2.00,80,-8341.80,-37.02,0,14191.10,0,0.00
2025.11.14,15.01,0.62|4.59,6,-63588.10,-73.84,0,22532.90,0,0.00
2025.11.13,16.35,0.89|10.78,5,17802.50,26.06,0,86121.00,0,0.00
2025.11.12,37.42,0.06|16.16,21,10437.60,18.03,0,68318.50,0,0.00
2025.11.10,6.72,0.06|0.10,105,825.80,1.45,0,57880.90,0,0.00
2025.11.07,13.11,0.06|0.21,185,1595.70,2.88,0,57055.10,0,0.00
2025.11.06,13.44,0.06|0.77,150,1676.60,3.12,0,55459.40,0,0.00
2025.11.05,18.98,0.06|0.30,251,2368.20,4.61,0,53782.80,0,0.00
2025.11.04,11.29,0.06|0.17,164,1414.60,2.83,50000,51414.60,0,0.00`
  }
};

const stroke = { r: 'stroke="#f00" stroke-dasharray="9 3 1 3"', g: 'stroke="#32cd32" stroke-dasharray="3 3"', s: 'stroke="#778899"' };

function canvas(c) {
  const lines = c.lines.map(([k, y]) => `<line x1="0" x2="100%" y1="${y}.5" y2="${y}.5" ${stroke[k]}/>`).join("");
  const bars = c.candles.map(([x, hi, top, bottom, lo, full]) =>
    `<path d="M${x}.5 ${hi}V${top}M${x}.5 ${bottom}V${lo}M${x - c.half}.5 ${top}.5h${c.half * 2}V${bottom}.5h${-c.half * 2}z" fill="${full ? "#fff" : "#000"}" stroke="#0f0"/>`).join("");
  const marks = c.marks.map(([t, y]) => `<text x="4" y="${y}" fill="#fff">${t}</text>`).join("");
  return `<svg class="canvas">${lines}${bars}${marks}<path d="M${c.shift - 5} 0h11l-5.500 5z" fill="#778899"/></svg>`;
}

const sign = (v) => (parseFloat(v) > 0 ? "gain" : parseFloat(v) < 0 ? "loss" : "");
function stats(c) {
  const heads = ["日期", "总手数", "最小|大手数", "次数", "盈亏金额", "百分比%", "出入金", "余额", "最大浮亏金额", "最大浮亏比例"];
  const widths = [80, 50, 70, 30, 80, 60, 60, 80, 80, 99];
  const body = c.rows.split("\n").map((line) => {
    const v = line.split(",");
    const s = sign(v[4]);
    const cls = ["", s, s, s, s, s, sign(v[6]), "", sign(v[8]), sign(v[9])];
    v[2] = v[2].replace("|", " | ");
    v[5] += " %";
    v[9] += " %";
    return `<tr>${v.map((t, i) => `<td class="${cls[i]}">${t}</td>`).join("")}</tr>`;
  }).join("");
  return `<section class="stats"><div class="side"><button>–</button><button>移</button><button>?</button><button>√</button><span>V 5.16</span></div>
    <header><div class="head"><h2>MTCommander统计</h2><a href="#">复盘侠 http://MTCommander.com</a></div>
    <div class="tabs">${[..."综日周月季年币M备", "账户"].map((t) => `<button class="${t === "日" ? "on" : ""}">${t}</button>`).join("")}</div></header>
    <table><colgroup>${widths.map((w) => `<col style="width:${w}px">`).join("")}</colgroup><thead><tr>${heads.map((h) => `<th>${h}</th>`).join("")}</tr></thead><tbody>${body}</tbody></table></section>`;
}

const latin = (text) => text.replace(/[\x20-\x7e]+/g, "<span>$&</span>");

document.querySelectorAll(".win").forEach((win) => {
  const c = charts[win.dataset.id];
  const title = win.querySelector(".titlebar");
  title.insertAdjacentHTML("beforeend", `<div class="caption">${["min", "max", "close"].map((n) => `<button aria-label="${n}">${icon(n)}</button>`).join("")}</div>`);
  title.insertAdjacentHTML("afterend", `
    <nav class="menubar">${icon("candles")}<ul>${menus.map(([t, k]) => `<li><button>${t}(<u>${k}</u>)</button></li>`).join("")}</ul>
      <div class="mdi">${["mmin", "mres", "mclose"].map((n) => `<button aria-label="${n.slice(1)}">${icon(n)}</button>`).join("")}</div></nav>
    <div class="toolbar"><div class="tools"><span class="grip"></span>${win.dataset.tools.split(" ").map(tool).join("")}</div>
      <div class="right-tools"><button aria-label="搜索">${icon("search")}</button><button class="user" aria-label="通知">${icon("user")}<span class="badge">1</span></button><button class="lvl">${icon("lvl")}<span>LVL</span></button><progress max="100" value="${c.level}" aria-label="level"></progress></div></div>`);

  const prices = Array.from({ length: 11 }, (_, i) => `<li>${(c.first - i * c.step).toFixed(c.digits)}</li>`).join("");
  win.querySelector(".chart").innerHTML = `
    <div class="plot">${canvas(c)}
      <div class="volume">${c.volume.map((h) => `<i style="height:${h}px"></i>`).join("")}</div>
      <div class="symbol">${icon("book")}${icon("deal")}${c.symbol}</div>
      <div class="strategy"><h2>${latin("=== 策略状态面板 ===")}</h2><ul>${c.strategy.map(([k, t, over]) => `<li class="${k}${over ? " over" : ""}">${latin(t)}</li>`).join("")}</ul></div>
      <div class="actions"><button>空单全平</button><button>多单全平</button><button>账户全平</button></div>
      <div class="count">${c.count}</div>
      ${c.rows ? stats(c) : '<div class="folded"><button>+</button>MTCommander统计</div>'}
      <div class="expert">新多指标锁仓${icon("cap")}</div>
    </div>
    <ol class="prices">${prices}<li class="last" style="top:${c.last[1]}px">${c.last[0]}</li></ol>
    <ol class="times">${c.times.split(",").map((t) => `<li>${t}</li>`).join("")}</ol>`;

  const status = win.querySelector(".status");
  if (status) status.innerHTML = `<span>查看帮忙,请按 F1</span><span>Default</span>${"<span></span>".repeat(6)}<span>${icon("net")}${status.dataset.ping}</span>`;
});
```
